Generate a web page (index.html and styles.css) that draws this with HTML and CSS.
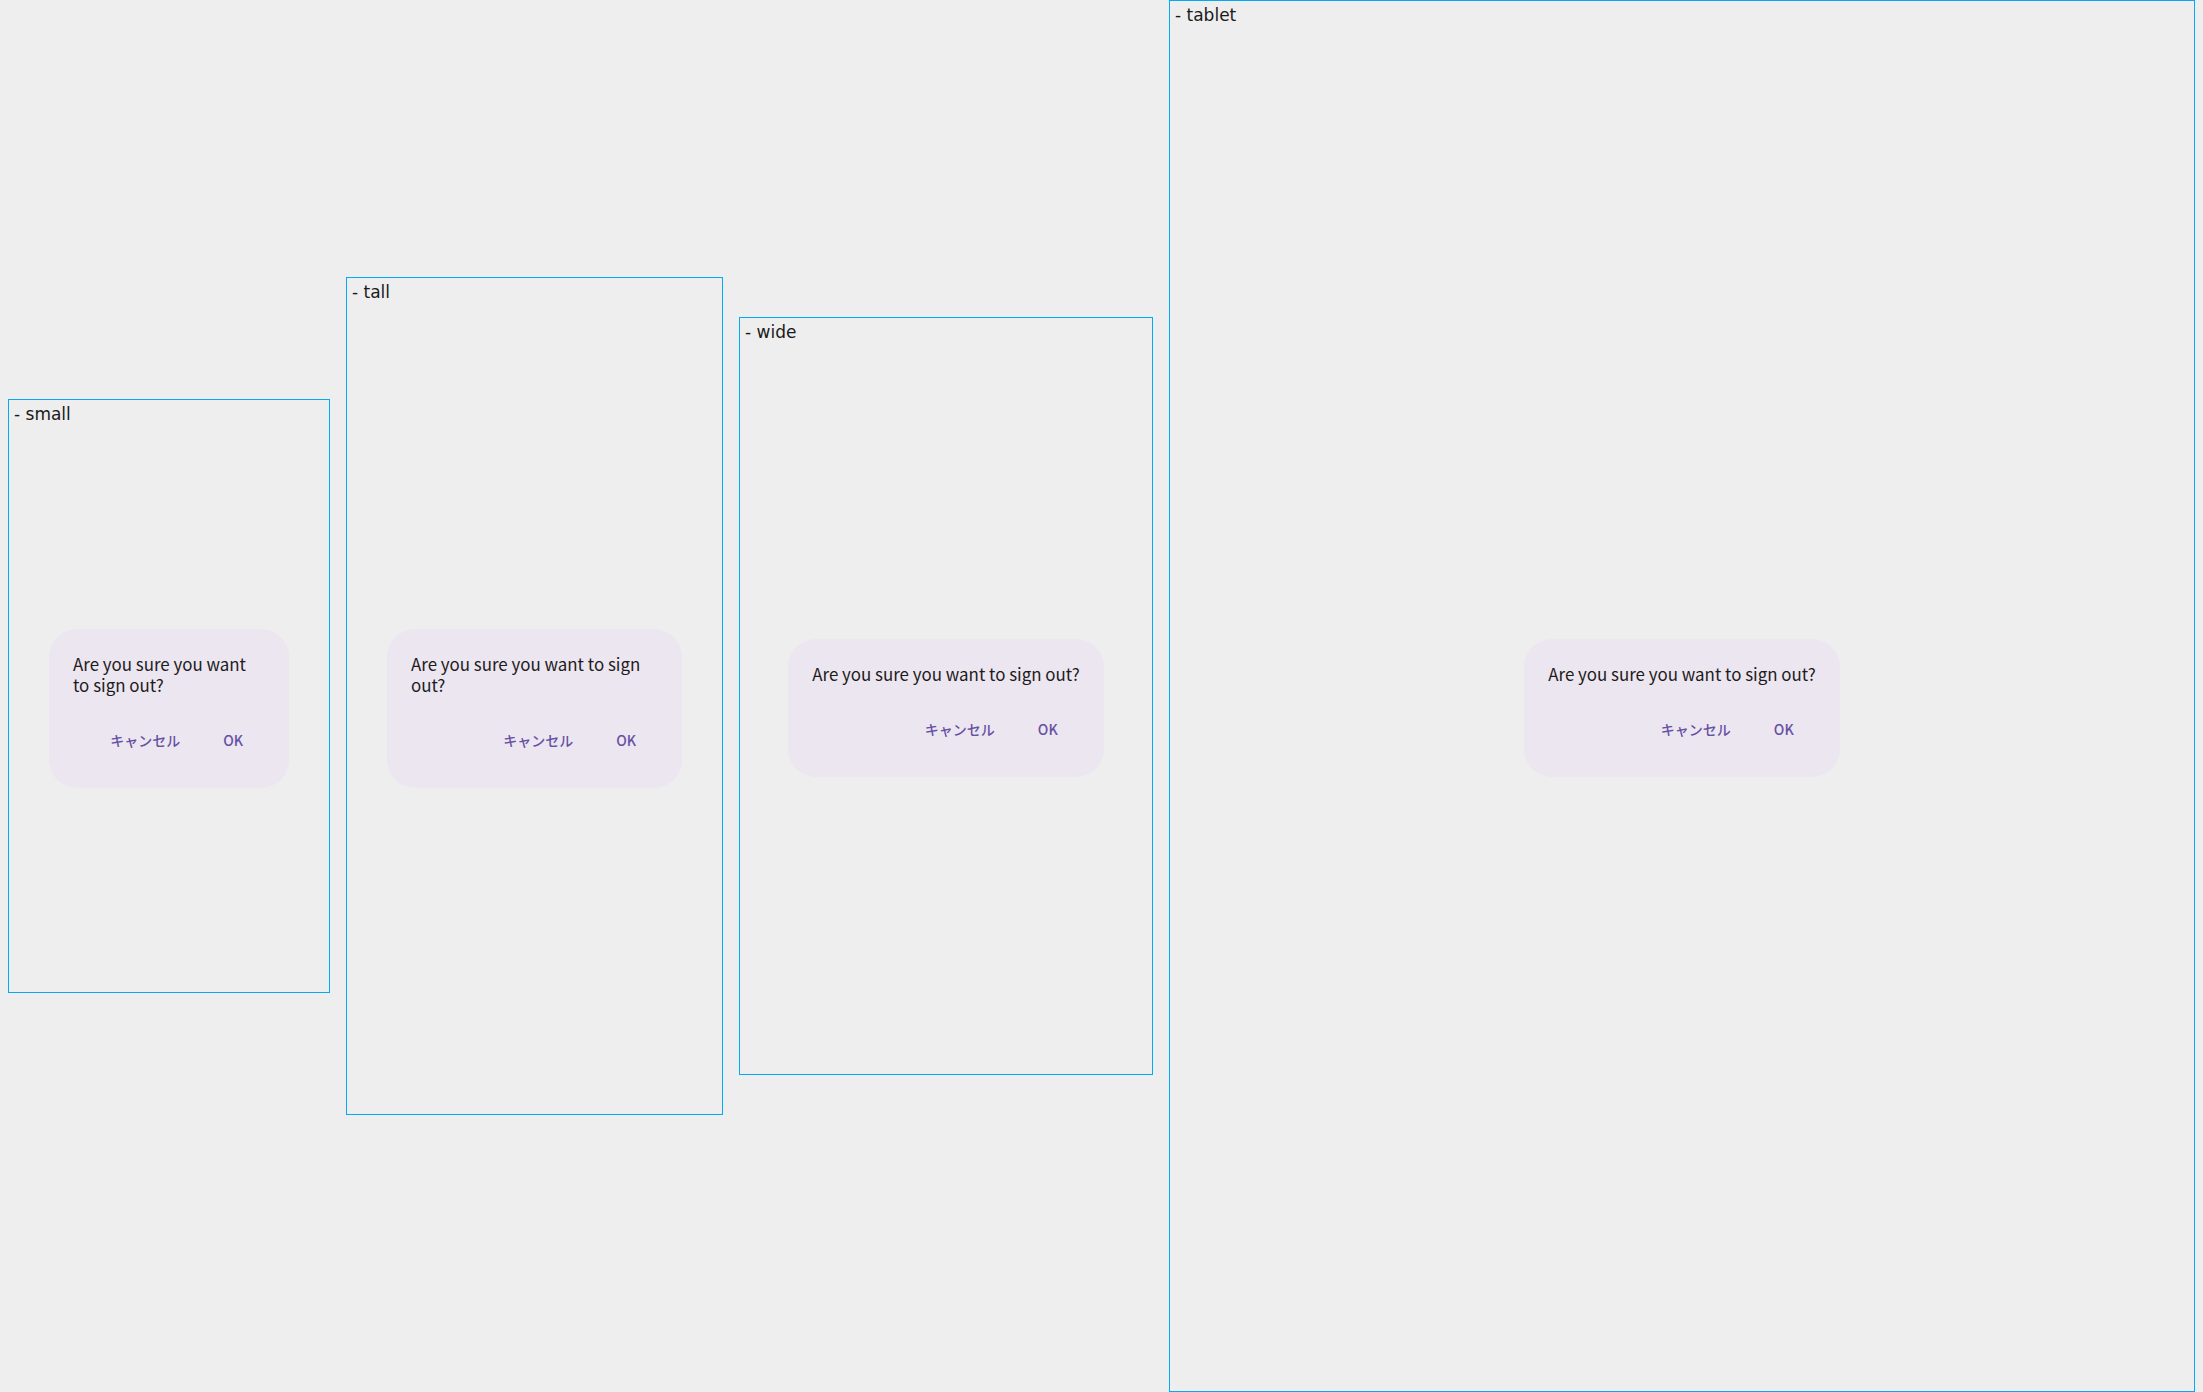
FILE: index.html
```html
<!DOCTYPE html>
<html lang="en">
<head>
<meta charset="utf-8">
<title>Dialog previews</title>
<link rel="stylesheet" href="styles.css">
</head>
<body>
<div class="row">
  <div class="frame f-small">
    <div class="label">- small</div>
    <div class="screen">
      <div class="dialog">
        <p class="msg">Are you sure you want to sign out?</p>
        <div class="actions"><span class="btn">キャンセル</span><span class="btn ok">OK</span></div>
      </div>
    </div>
  </div>
  <div class="frame f-tall">
    <div class="label">- tall</div>
    <div class="screen">
      <div class="dialog">
        <p class="msg">Are you sure you want to sign out?</p>
        <div class="actions"><span class="btn">キャンセル</span><span class="btn ok">OK</span></div>
      </div>
    </div>
  </div>
  <div class="frame f-wide">
    <div class="label">- wide</div>
    <div class="screen">
      <div class="dialog">
        <p class="msg">Are you sure you want to sign out?</p>
        <div class="actions"><span class="btn">キャンセル</span><span class="btn ok">OK</span></div>
      </div>
    </div>
  </div>
  <div class="frame f-tablet">
    <div class="label">- tablet</div>
    <div class="screen">
      <div class="dialog">
        <p class="msg">Are you sure you want to sign out?</p>
        <div class="actions"><span class="btn">キャンセル</span><span class="btn ok">OK</span></div>
      </div>
    </div>
  </div>
</div>
</body>
</html>
```
FILE: styles.css
```css
html, body {
  margin: 0;
  padding: 0;
  background: #eeeeee;
}

.row {
  display: flex;
  align-items: center;
  gap: 16px;
  padding-left: 8px;
  height: 1392px;
  overflow: hidden;
}

.frame {
  flex: none;
  display: flex;
  flex-direction: column;
  border: 1px solid #03a9f4;
}

.f-small { width: 320px; }
.f-small .screen { height: 568px; }
.f-tall { width: 375px; }
.f-tall .screen { height: 812px; }
.f-wide { width: 412px; }
.f-wide .screen { height: 732px; }
.f-tablet { width: 1024px; }
.f-tablet .screen { height: 1366px; }

.label {
  height: 24px;
  line-height: 29px;
  padding: 0 5px;
  font-family: "DejaVu Sans", sans-serif;
  font-size: 17px;
  color: #1a1a1a;
  white-space: nowrap;
}

.screen {
  display: flex;
  align-items: center;
  justify-content: center;
  padding: 0 40px;
}

.dialog {
  background: #ece6f0;
  border-radius: 28px;
  padding: 24px;
  max-width: 100%;
  box-sizing: border-box;
}

.msg {
  margin: 0 0 21px 0;
  font-family: "Noto Sans CJK JP", "Noto Sans", sans-serif;
  font-size: 16.9px;
  line-height: 21px;
  color: #1d1b20;
}

.actions {
  display: flex;
  justify-content: flex-end;
  align-items: center;
  height: 48px;
  gap: 9px;
}

.btn {
  font-family: "Noto Sans CJK JP", "Noto Sans", sans-serif;
  font-size: 14px;
  font-weight: 500;
  color: #6750a4;
  padding: 0 12px;
  line-height: 40px;
  white-space: nowrap;
}

.btn.ok {
  padding: 0 22px;
}
```
